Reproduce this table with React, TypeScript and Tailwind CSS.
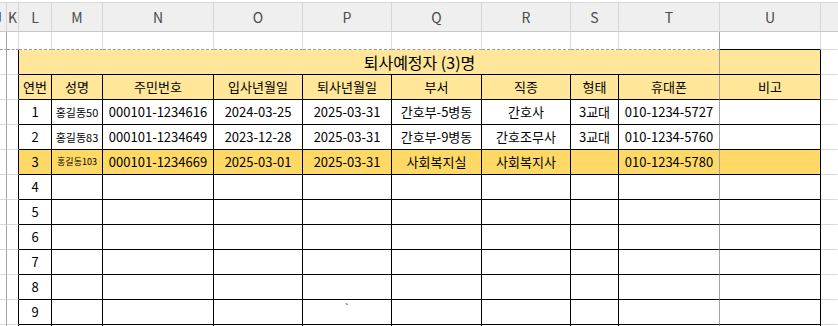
import type { ReactNode } from "react";

const FONT = "font-['Noto_Sans_CJK_KR','Noto_Sans',sans-serif]";

const COLS = [
  { id: "J", w: "w-[7px]" },
  { id: "K", w: "w-[12px]" },
  { id: "L", w: "w-[33px]" },
  { id: "M", w: "w-[51px]" },
  { id: "N", w: "w-[111px]" },
  { id: "O", w: "w-[89px]" },
  { id: "P", w: "w-[89px]" },
  { id: "Q", w: "w-[90px]" },
  { id: "R", w: "w-[89px]" },
  { id: "S", w: "w-[48px]" },
  { id: "T", w: "w-[101px]" },
  { id: "U", w: "w-[101px]" },
  { id: "V", w: "flex-1" },
];

const GRID_R = "border-r-[#dadada]";
const GRID_B = "border-b-[#dadada]";
const BREAK_R = "border-r-[#a3a3a3]";

// right border inside the table rows (title, header, data)
const tableRight = (i: number) => {
  if (i === 0 || i === 10) return BREAK_R;
  if (i === 12) return "border-r-transparent";
  return "border-r-black";
};
const tableBottom = (i: number) => (i < 2 || i === 12 ? GRID_B : "border-b-black");

type Person = {
  no: string;
  name: string;
  nameSize: string;
  ssn: string;
  join: string;
  leave: string;
  dept: string;
  job: string;
  shift: string;
  phone: string;
  bg: string;
};

const people: Person[] = [
  {
    no: "1",
    name: "홍길동50",
    nameSize: "text-[11px]",
    ssn: "000101-1234616",
    join: "2024-03-25",
    leave: "2025-03-31",
    dept: "간호부-5병동",
    job: "간호사",
    shift: "3교대",
    phone: "010-1234-5727",
    bg: "bg-white",
  },
  {
    no: "2",
    name: "홍길동83",
    nameSize: "text-[11px]",
    ssn: "000101-1234649",
    join: "2023-12-28",
    leave: "2025-03-31",
    dept: "간호부-9병동",
    job: "간호조무사",
    shift: "3교대",
    phone: "010-1234-5760",
    bg: "bg-white",
  },
  {
    no: "3",
    name: "홍길동103",
    nameSize: "text-[9px]",
    ssn: "000101-1234669",
    join: "2025-03-01",
    leave: "2025-03-31",
    dept: "사회복지실",
    job: "사회복지사",
    shift: "",
    phone: "010-1234-5780",
    bg: "bg-[#ffd966]",
  },
];

function Cell({
  w,
  r,
  b,
  bg = "bg-white",
  className = "",
  children,
}: {
  w: string;
  r: string;
  b: string;
  bg?: string;
  className?: string;
  children?: ReactNode;
}) {
  return (
    <div
      className={`${w} ${r} ${b} ${bg} ${className} shrink-0 h-full border-r border-b flex items-center justify-center overflow-hidden whitespace-nowrap`}
    >
      {children}
    </div>
  );
}

function DataRow({ cells, bg, h = "h-[25px]" }: { cells: ReactNode[]; bg: string; h?: string }) {
  return (
    <div className={`flex ${h}`}>
      {COLS.map((c, i) => (
        <Cell
          key={c.id}
          w={c.w}
          r={tableRight(i)}
          b={tableBottom(i)}
          bg={i >= 2 && i <= 11 ? bg : "bg-white"}
        >
          {cells[i]}
        </Cell>
      ))}
    </div>
  );
}

export default function App() {
  const headers = ["연번", "성명", "주민번호", "입사년월일", "퇴사년월일", "부서", "직종", "형태", "휴대폰", "비고"];

  return (
    <div className={`${FONT} w-[838px] h-[326px] overflow-hidden bg-white text-black text-[13px]`}>
      <div className="h-[2px]" />

      {/* column letters */}
      <div className="flex h-[30px] border-t border-b border-t-[#d9d9d9] border-b-[#c8c8c8] bg-[#efefef] text-[14px] text-[#4a4a4a]">
        {COLS.map((c) => (
          <div
            key={c.id}
            className={`${c.w} shrink-0 h-full flex items-center ${c.id === "J" ? "justify-end" : "justify-center"} overflow-hidden ${c.id === "V" ? "" : "border-r border-r-[#d6d6d6]"}`}
          >
            {c.id === "V" ? null : <span className={c.id === "J" ? "mr-[4px]" : ""}>{c.id}</span>}
          </div>
        ))}
      </div>

      {/* sheet row above the table */}
      <div className="flex h-[18px]">
        {COLS.map((c, i) => {
          const r = i === 0 || i === 10 ? BREAK_R : i === 12 ? "border-r-transparent" : GRID_R;
          const b =
            i === 11 ? "border-b-black" : i === 12 ? GRID_B : "border-b-[#9a9a9a] [border-bottom-style:dashed]";
          return <Cell key={c.id} w={c.w} r={r} b={b} />;
        })}
      </div>

      {/* title, merged L:U; the page break line runs over it */}
      <div className="flex h-[25px]">
        <Cell w="w-[7px]" r={BREAK_R} b={GRID_B} />
        <Cell w="w-[12px]" r="border-r-black" b={GRID_B} />
        <div className="relative w-[802px] shrink-0 h-full border-r border-b border-r-black border-b-black bg-[#ffe699] flex items-center justify-center text-[16px] whitespace-nowrap">
          퇴사예정자 (3)명
          <div className="absolute left-[700px] top-0 bottom-0 w-px bg-[#a3a3a3]" />
        </div>
        <Cell w="flex-1" r="border-r-transparent" b={GRID_B} />
      </div>

      {/* header */}
      <DataRow bg="bg-[#ffe699]" cells={[null, null, ...headers, null]} />

      {people.map((p) => (
        <DataRow
          key={p.no}
          bg={p.bg}
          cells={[
            null,
            null,
            p.no,
            <span className={p.nameSize}>{p.name}</span>,
            p.ssn,
            p.join,
            p.leave,
            p.dept,
            p.job,
            p.shift,
            p.phone,
            null,
            null,
          ]}
        />
      ))}

      {[4, 5, 6, 7, 8, 9].map((n) => (
        <DataRow
          key={n}
          bg="bg-white"
          cells={[
            null,
            null,
            String(n),
            null,
            null,
            null,
            n === 9 ? <span className="-mt-[10px] text-[10px] text-[#333]">`</span> : null,
          ]}
        />
      ))}

      <DataRow bg="bg-white" h="h-[20px]" cells={[]} />
    </div>
  );
}
